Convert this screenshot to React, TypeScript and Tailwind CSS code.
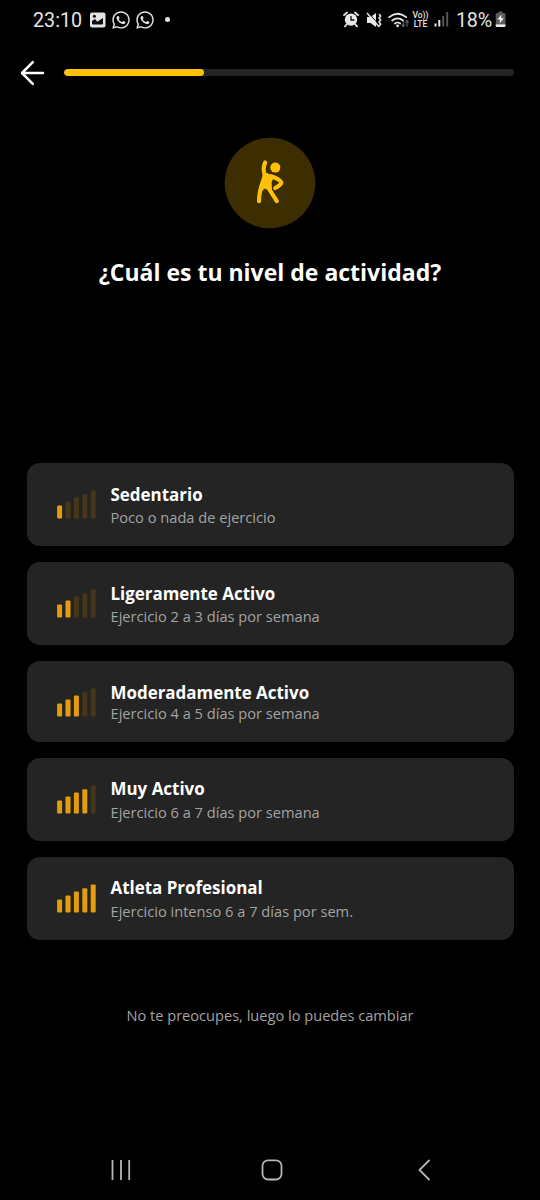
import React from "react";
import { FaWhatsapp } from "react-icons/fa";

const BAR_TOPS = [15.5, 11.5, 7.5, 4.2, 0.4];

function LevelBars({ level }: { level: number }) {
  return (
    <svg width="40" height="29" viewBox="0 0 40 29" className="shrink-0">
      {BAR_TOPS.map((top, i) => (
        <rect
          key={i}
          x={0.1 + i * 8.4}
          y={top}
          width="5"
          height={28.4 - top}
          rx="1"
          fill={i < level ? "#e39c0d" : "#46371a"}
        />
      ))}
    </svg>
  );
}

type Option = {
  level: number;
  title: string;
  detail: string;
  card: string;
  detailGap: string;
};

const OPTIONS: Option[] = [
  { level: 1, title: "Sedentario", detail: "Poco o nada de ejercicio", card: "h-[83px]", detailGap: "mt-[1.5px]" },
  { level: 2, title: "Ligeramente Activo", detail: "Ejercicio 2 a 3 días por semana", card: "h-[83px]", detailGap: "mt-[1.5px]" },
  { level: 3, title: "Moderadamente Activo", detail: "Ejercicio 4 a 5 días por semana", card: "h-[80.6px]", detailGap: "mt-[-0.5px]" },
  { level: 4, title: "Muy Activo", detail: "Ejercicio 6 a 7 días por semana", card: "h-[83px]", detailGap: "mt-[1.5px]" },
  { level: 5, title: "Atleta Profesional", detail: "Ejercicio intenso 6 a 7 días por sem.", card: "h-[83px]", detailGap: "mt-[1.5px]" },
];

function OptionCard({ option }: { option: Option }) {
  return (
    <button
      type="button"
      className={`flex w-full items-start rounded-[13px] bg-[#242424] pl-[30px] text-left ${option.card}`}
    >
      <span className="mt-[27px] block w-[54px]">
        <LevelBars level={option.level} />
      </span>
      <span className="mt-[20.5px] flex flex-col whitespace-nowrap">
        <span className="text-[16.95px] leading-[22px] font-bold text-white">{option.title}</span>
        <span className={`text-[14.63px] leading-[20px] text-[#a3a3a3] ${option.detailGap}`}>{option.detail}</span>
      </span>
    </button>
  );
}

function StatusBar() {
  return (
    <div className="flex h-10 items-center justify-between pr-[33px] pl-[33px] font-['Roboto',sans-serif] text-[#e4e4e4]">
      <div className="flex items-center">
        <span className="mt-[2px] w-[56px] text-[19.7px] leading-none">23:10</span>
        <svg width="17" height="16" viewBox="0 0 17 16">
          <rect x="1" y="0.5" width="15.5" height="15" rx="2" fill="#e4e4e4" />
          <path d="M3 11.5V9L6 7l2.3 2.8L14 6v5.5q0 1-1 1H4q-1 0-1-1Z" fill="#0a0a0a" />
          <circle cx="5.4" cy="4.2" r="1.5" fill="#0a0a0a" />
        </svg>
        <FaWhatsapp className="ml-[5px] size-[20px]" />
        <FaWhatsapp className="ml-[4px] size-[20px]" />
        <span className="ml-[10px] size-[5px] rounded-full bg-[#e4e4e4]" />
      </div>
      <div className="flex items-center">
        <svg width="16" height="17" viewBox="0 0 16 17" fill="none">
          <circle cx="8" cy="8.6" r="6.2" fill="#e8e8e8" />
          <path d="m1 4.2 3-2.7M15 4.2l-3-2.7M3.6 13.5 2 15.3M12.4 13.5l1.6 1.8" stroke="#e8e8e8" strokeWidth="1.8" strokeLinecap="round" />
          <path d="M8 5v4h3.4" stroke="#111" strokeWidth="1.3" />
        </svg>
        <svg width="16" height="16" viewBox="0 0 16 16" fill="none" className="ml-[7px]">
          <path d="M1 5h3.5L10 1v14L4.5 11H1Z" fill="#e8e8e8" />
          <path d="m2.6 1 12 13.5" stroke="#000" strokeWidth="1" />
          <path d="m1 1 12.3 14" stroke="#e8e8e8" strokeWidth="1.5" />
          <path d="m13 2 1.7 2-1.7 2 1.7 2-1.7 2 1.7 2-1.5 2" stroke="#e8e8e8" strokeWidth="1.5" />
        </svg>
        <svg width="22" height="18" viewBox="0 0 22 18" fill="none" className="ml-[6px]">
          <path d="M1.2 6.2Q9.5-.7 18.2 6.2M4.2 9.5q5.4-4.4 10.8 0M7 12.5q2.6-2 5.2 0" stroke="#e8e8e8" strokeWidth="1.7" strokeLinecap="round" />
          <circle cx="9.6" cy="14.8" r="1.4" fill="#e8e8e8" />
          <path d="M15.3 10v5.5m-1.7-2 1.7 2.1 1.7-2.1M19 15.7v-6m-1.7 2L19 9.6l1.7 2.1" stroke="#666" strokeWidth="1.1" />
        </svg>
        <span className="ml-[2px] flex w-[17px] flex-col items-center text-[8.5px] leading-[9px] font-medium">
          <span>Vo))</span>
          <span>LTE</span>
        </span>
        <svg width="16" height="17" viewBox="0 0 16 17" className="ml-[5px]">
          <rect x="0.5" y="12.5" width="2" height="3" fill="#e8e8e8" />
          <rect x="4.3" y="9" width="2" height="6.5" fill="#e8e8e8" />
          <rect x="8.2" y="5" width="2" height="10.5" fill="#555" />
          <rect x="12.2" y="1" width="2" height="14.5" fill="#555" />
        </svg>
        <span className="mt-[2px] ml-[6px] w-[39px] text-[19.7px] leading-none tracking-[-0.2px]">18%</span>
        <svg width="12" height="17" viewBox="0 0 12 17">
          <path d="M3.5 2V.5h4V2H9q1.5 0 1.5 1.5V13H.7V3.5Q.7 2 2.2 2Z" fill="#5c5c5c" />
          <path d="M.7 13.3h9.8v1.2Q10.5 16 9 16H2.2Q.7 16 .7 14.5Z" fill="#eee" />
          <path d="M6.5 3.5 2.4 8.6h2.8l-.6 3.7 4.2-5H6Z" fill="#fff" />
        </svg>
      </div>
    </div>
  );
}

export default function App() {
  return (
    <div className="flex h-[1200px] w-[540px] flex-col overflow-hidden bg-black font-['Open_Sans','Noto_Sans',sans-serif] text-white">
      <StatusBar />

      <header className="flex h-[65px] items-center pr-[26.5px] pl-[20px]">
        <svg width="26" height="26" viewBox="0 0 26 26" fill="none">
          <path d="M12.8 2.2 2 13l10.8 10.8M2.2 13H23" stroke="#fff" strokeWidth="2.5" strokeLinecap="round" strokeLinejoin="round" />
        </svg>
        <div className="ml-[18.4px] h-[6.5px] flex-1 overflow-hidden rounded-full bg-[#242424]">
          <div className="h-full w-[139.5px] rounded-full bg-[#ffc107]" />
        </div>
      </header>

      <main className="flex flex-col items-center">
        <svg width="92" height="92" viewBox="0 0 92 92" fill="none" className="mt-[32px]">
          <circle cx="46" cy="46" r="45.3" fill="#3d2e02" />
          <g transform="translate(31 21)">
            <circle cx="20.3" cy="9.6" r="5" fill="#ffc107" />
            <path d="M7.8 16.2Q9 15.2 11 15.3L19.5 18.2 16.6 24 17 32 12.4 31.5 8.8 30.5 8 33 4.8 31Q5.4 23.5 7.8 16.2Z" fill="#ffc107" />
            <path
              d="M10.2 4.5Q7.6 10 9.5 16.5L12.5 17.5M16 18.2Q24.5 20.8 26.3 24.4 27 26.4 20.2 30M7.8 24Q4.3 32 4 43.2M13.5 30 21.8 43.2"
              stroke="#ffc107"
              strokeWidth="4.1"
              strokeLinecap="round"
              strokeLinejoin="round"
            />
          </g>
        </svg>
        <h1 className="mt-[27px] text-[23px] leading-8 font-bold whitespace-nowrap">¿Cuál es tu nivel de actividad?</h1>
        <div className="mt-[175.4px] flex w-[487px] flex-col gap-4">
          {OPTIONS.map((option) => (
            <OptionCard key={option.level} option={option} />
          ))}
        </div>
        <p className="mt-[64px] text-[14.6px] leading-[22px] whitespace-nowrap text-[#a3a3a3]">
          No te preocupes, luego lo puedes cambiar
        </p>
      </main>

      <nav className="mt-auto flex h-[60px] items-center pl-[110px]">
        <svg width="22" height="22" viewBox="0 0 22 22" stroke="#b5b5b5" strokeWidth="1.8">
          <path d="M2.5 1v20M11 1v20M19.2 1v20" />
        </svg>
        <svg width="22" height="22" viewBox="0 0 22 22" fill="none" stroke="#b5b5b5" strokeWidth="1.8" className="ml-[129px]">
          <rect x="1.5" y="1.3" width="19" height="19.2" rx="5.5" />
        </svg>
        <svg width="14" height="22" viewBox="0 0 14 22" fill="none" stroke="#b5b5b5" strokeWidth="1.8" className="ml-[133.5px]">
          <path d="M12.5 1 2.5 11l10 10" />
        </svg>
      </nav>
    </div>
  );
}
